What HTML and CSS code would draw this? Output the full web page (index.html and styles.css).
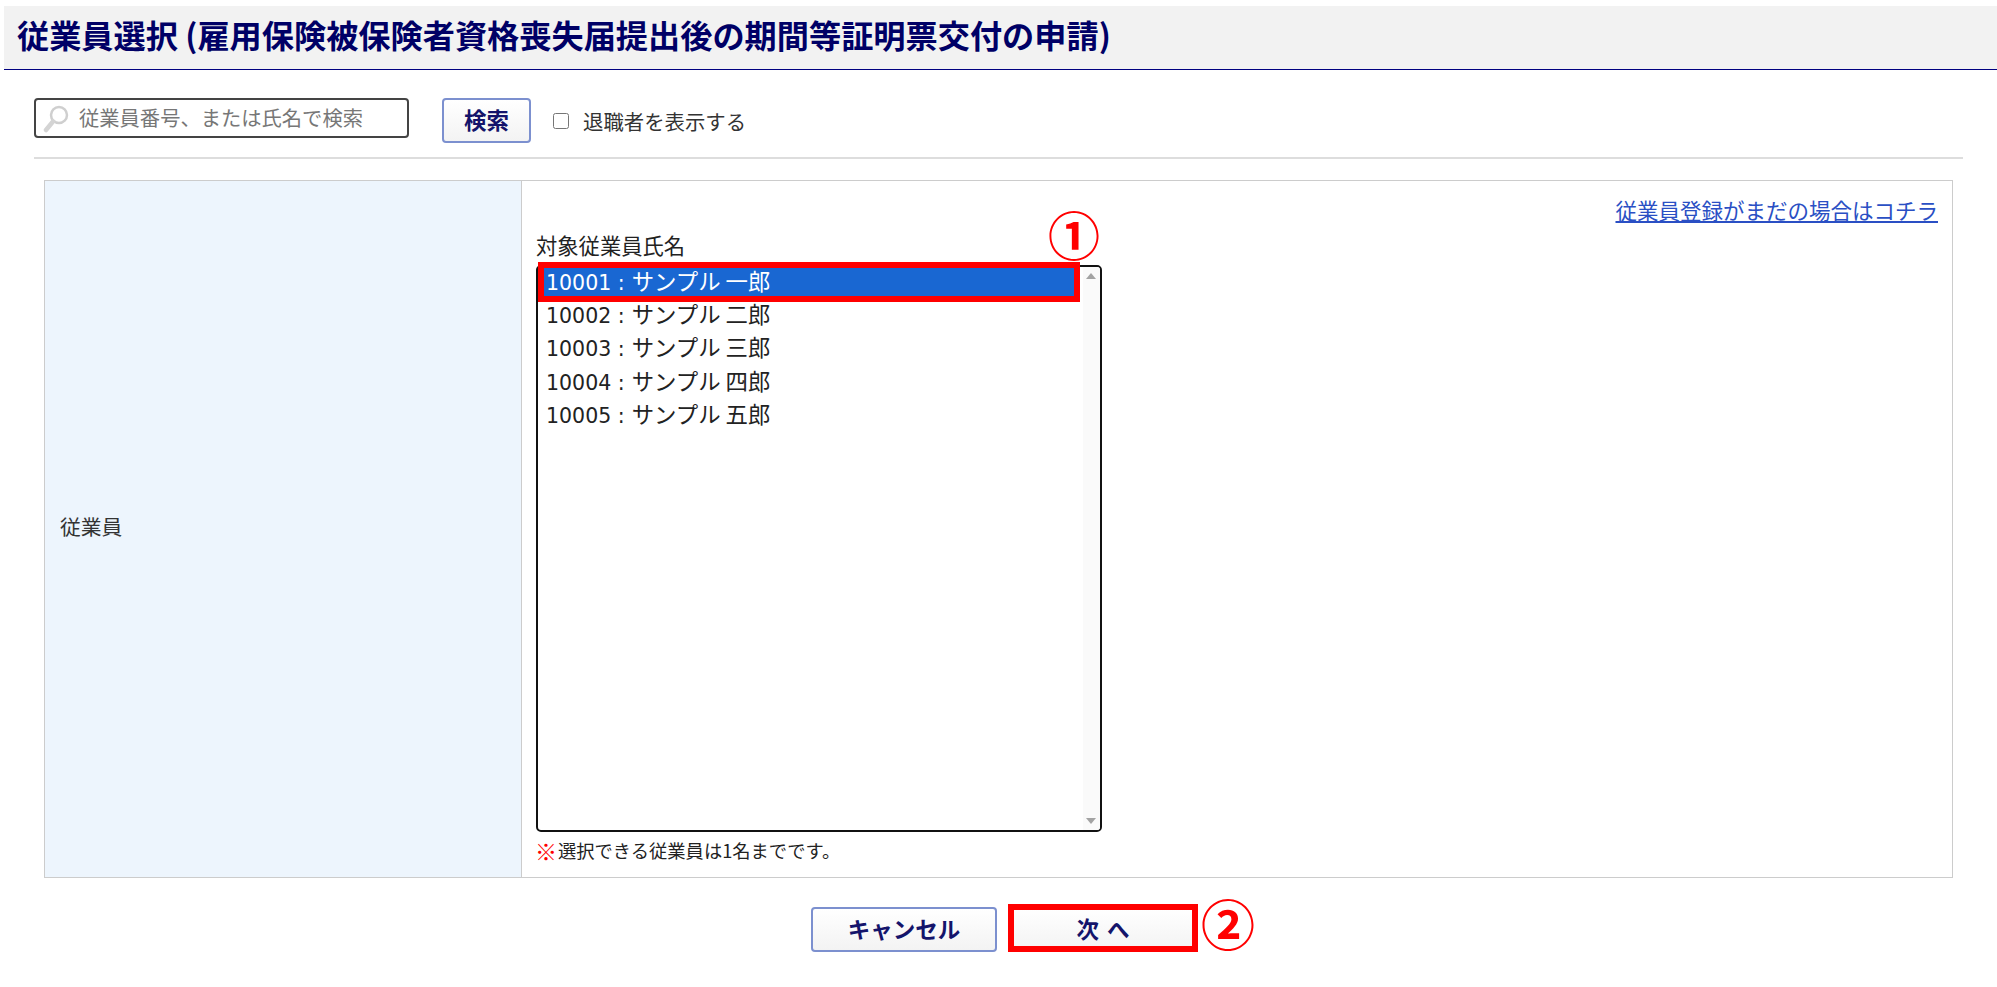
FILE: index.html
```html
<!DOCTYPE html>
<html lang="ja">
<head>
<meta charset="utf-8">
<title>従業員選択</title>
<link rel="stylesheet" href="styles.css">
</head>
<body>
<h1 class="title">従業員選択 (雇用保険被保険者資格喪失届提出後の期間等証明票交付の申請)</h1>
<div class="search">
  <div class="search-box">
    <svg class="search-icon" width="26" height="28" viewBox="0 0 26 28"><circle cx="16" cy="10" r="8" fill="#fff" stroke="#cfcfcf" stroke-width="2.5"/><path d="M10 16.5 3 25" stroke="#d4d4d4" stroke-width="4.5" stroke-linecap="round"/></svg>
    <input class="search-input" type="text" placeholder="従業員番号、または氏名で検索">
  </div>
  <button class="btn btn-search" type="button">検索</button>
  <label class="retired"><input class="retired-check" type="checkbox">退職者を表示する</label>
</div>
<div class="form">
  <div class="form-head">従業員</div>
  <div class="form-body">
    <div class="link-row"><a class="link" href="#">従業員登録がまだの場合はコチラ</a></div>
    <div class="list-label">対象従業員氏名</div>
    <div class="list-wrap">
      <div class="list">
        <div class="rows">
          <div class="row row-selected"><span class="code">10001 :</span> サンプル 一郎</div>
          <div class="row"><span class="code">10002 :</span> サンプル 二郎</div>
          <div class="row"><span class="code">10003 :</span> サンプル 三郎</div>
          <div class="row"><span class="code">10004 :</span> サンプル 四郎</div>
          <div class="row"><span class="code">10005 :</span> サンプル 五郎</div>
        </div>
        <div class="scrollbar"><span class="arrow-up"></span><span class="arrow-down"></span></div>
      </div>
      <div class="mark-box mark-row"></div>
      <div class="mark-num mark-num-1">①</div>
    </div>
    <div class="note"><span class="note-mark">※</span>選択できる従業員は1名までです。</div>
  </div>
</div>
<div class="actions">
  <button class="btn btn-cancel" type="button">キャンセル</button>
  <div class="next-wrap">
    <button class="btn btn-next" type="button">次 へ</button>
    <div class="mark-box mark-next"></div>
    <div class="mark-num mark-num-2">②</div>
  </div>
</div>
</body>
</html>
```
FILE: styles.css
```css
* { box-sizing: border-box; }
html, body { margin: 0; padding: 0; background: #fff; }
body {
  width: 1997px;
  height: 987px;
  overflow: hidden;
  color: #222;
  font-family: "Noto Sans CJK JP", sans-serif;
}
.title {
  margin: 6px 0 0 4px;
  height: 64px;
  padding: 0 0 8px 13px;
  display: flex;
  align-items: center;
  background: #f2f2f2;
  border-bottom: 1px solid #000080;
  color: #000066;
  font-size: 32.2px;
  font-weight: 700;
  white-space: nowrap;
}
.search {
  margin: 28px 34px 0 34px;
  height: 61px;
  padding-bottom: 14px;
  border-bottom: 2px solid #ddd;
  display: flex;
  align-items: flex-start;
}
.search-box { position: relative; width: 375px; height: 40px; }
.search-icon { position: absolute; left: 9px; top: 7px; }
.search-input {
  width: 100%;
  height: 100%;
  padding: 0 0 3px 43px;
  border: 2px solid #444;
  border-radius: 4px;
  background: #fff;
  font: 20.3px "Noto Sans CJK JP", sans-serif;
  outline: none;
}
.search-input::placeholder { color: #777; opacity: 1; }
.btn {
  height: 45px;
  padding: 0 0 3px;
  border: 2px solid #7c90cf;
  border-radius: 4px;
  background: linear-gradient(#fff, #f3f3f3);
  color: #14146b;
  font-family: "Noto Sans CJK JP", sans-serif;
  font-size: 22.5px;
  font-weight: 700;
  word-spacing: 3px;
}
.btn-search { width: 89px; margin-left: 33px; }
.retired {
  display: flex;
  align-items: center;
  height: 45px;
  margin-left: 22px;
  font-size: 20.4px;
  color: #333;
}
.retired-check { width: 16px; height: 16px; margin: 0 14px 0 0; }
.form {
  margin: 21px 44px 0 44px;
  height: 698px;
  display: grid;
  grid-template-columns: 477px 1fr;
  border: 1px solid #ccc;
}
.form-head {
  display: flex;
  align-items: center;
  padding: 0 0 6px 15px;
  background: #edf5fd;
  border-right: 1px solid #ccc;
  font-size: 20.8px;
  color: #333;
}
.form-body { padding: 15px 14px 0 14px; }
.link-row { display: flex; justify-content: flex-end; height: 31px; line-height: 28px; }
.link { color: #2a4fc4; font-size: 21.5px; }
.list-label { height: 38px; line-height: 35px; font-size: 21.3px; color: #222; }
.list-wrap { position: relative; width: 566px; }
.list {
  display: flex;
  height: 567px;
  border: 2px solid #111;
  border-radius: 5px;
  overflow: hidden;
}
.rows { flex: 1; padding-right: 3px; }
.row {
  height: 33.2px;
  line-height: 26px;
  padding-left: 8px;
  font-size: 22.4px;
  color: #222;
  white-space: nowrap;
}
.code { font-family: "DejaVu Sans", sans-serif; font-size: 20.5px; margin-right: 2px; }
.row-selected { background: #1967d2; color: #fff; }
.scrollbar { position: relative; width: 17px; background: #fafafa; }
.arrow-up, .arrow-down {
  position: absolute;
  left: 3px;
  width: 0;
  height: 0;
  border-left: 5px solid transparent;
  border-right: 5px solid transparent;
}
.arrow-up { top: 6px; border-bottom: 6px solid #a3a3a3; }
.arrow-down { bottom: 6px; border-top: 6px solid #a3a3a3; }
.mark-box { position: absolute; border: 6px solid #ff0000; }
.mark-row { left: 2px; top: -3px; width: 542px; height: 40px; }
.mark-num {
  position: absolute;
  color: #ff0000;
  font-size: 52px;
  font-weight: 700;
  line-height: 52px;
}
.mark-num-1 { left: 512px; top: -57px; }
.note {
  display: flex;
  align-items: center;
  height: 30px;
  margin-top: 3px;
  font-size: 18.3px;
  color: #222;
}
.note-mark { color: #ff0000; font-size: 22px; font-weight: 700; margin: 0 0 0 -1px; width: 23px; }
.actions {
  display: flex;
  margin: 29px 0 0 811px;
  align-items: flex-start;
}
.btn-cancel { width: 186px; }
.next-wrap { position: relative; margin-left: 14px; width: 184px; height: 45px; }
.btn-next { width: 100%; }
.mark-next { left: -3px; top: -3px; width: 190px; height: 48px; }
.mark-num-2 { left: 190px; top: -10px; font-size: 54px; }
```
